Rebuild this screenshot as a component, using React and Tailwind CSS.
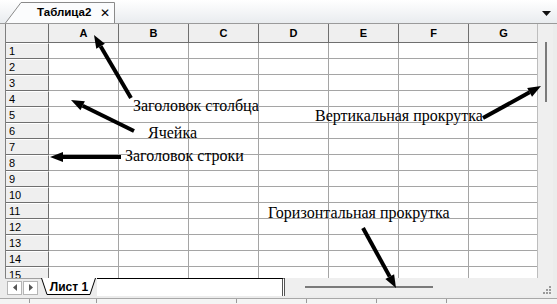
import React from 'react';

const cols = ['A', 'B', 'C', 'D', 'E', 'F', 'G'];
const rows = Array.from({ length: 15 }, (_, i) => i + 1);

const Arrow = ({ x1, y1, x2, y2 }) => {
  const a = Math.atan2(y2 - y1, x2 - x1);
  const len = 13;
  const w = 5;
  const bx = x2 - len * Math.cos(a);
  const by = y2 - len * Math.sin(a);
  const px = -Math.sin(a) * w;
  const py = Math.cos(a) * w;
  return (
    <g>
      <line x1={x1} y1={y1} x2={bx} y2={by} stroke="#000" strokeWidth="4" />
      <polygon points={`${x2},${y2} ${bx + px},${by + py} ${bx - px},${by - py}`} fill="#000" />
    </g>
  );
};

const Label = ({ className, children }) => (
  <div className={`absolute whitespace-nowrap font-['Liberation_Serif'] text-[16px] leading-none text-black ${className}`}>
    {children}
  </div>
);

export default function App() {
  return (
    <div className="relative w-[557px] h-[304px] overflow-hidden bg-[#ececec] font-['Liberation_Sans',sans-serif]">
      {/* document tab strip */}
      <div className="relative flex h-[24px] items-end justify-between border-b border-[#9a9a9a] bg-gradient-to-b from-white to-[#e9ecef] pl-[5px] pr-[6px]">
        <div className="relative flex h-[21px] w-[110px] items-center pl-[32px]">
          <svg className="absolute left-0 top-0" width="110" height="21" viewBox="0 0 110 21">
            <path d="M0.5 21 L16 0.5 H109.5 V21" fill="#fbfcfd" stroke="#8a8a8a" />
          </svg>
          <span className="relative text-[11.5px] font-bold text-black">Таблица2</span>
          <span className="relative ml-[9px] text-[12px] leading-none text-black">✕</span>
        </div>
        <svg className="mb-[7px]" width="9" height="5" viewBox="0 0 9 5">
          <polygon points="0,0 9,0 4.5,5" fill="#111" />
        </svg>
      </div>

      {/* sheet body */}
      <div className="flex h-[254px] pl-[5px] pr-[4px]">
        <div className="h-full w-[532px] overflow-hidden border-l border-[#7f7f7f] bg-white">
          <div className="grid grid-cols-[43px_repeat(7,70px)] grid-rows-[19px_repeat(15,16px)]">
            <div className="border-b border-r border-[#6f6f6f] bg-[#efefef]" />
            {cols.map((c) => (
              <div key={c} className="flex items-center justify-center border-b border-r border-[#6f6f6f] bg-[#efefef] text-[11px] font-bold text-black">
                {c}
              </div>
            ))}
            {rows.map((r) => (
              <React.Fragment key={r}>
                <div className="flex items-center border-b border-r border-[#6f6f6f] border-t border-t-white bg-[#efefef] pl-[3px] text-[11px] leading-none text-black">
                  {r}
                </div>
                {cols.map((c) => (
                  <div key={c} className="border-b border-r border-[#a5a5a5]" />
                ))}
              </React.Fragment>
            ))}
          </div>
        </div>
        {/* vertical scroll */}
        <div className="flex h-full w-[16px] justify-center border-l border-[#bdbdbd] bg-[#efefef] pt-[18px]">
          <div className="h-[60px] w-[2px] bg-[#7a7a7a]" />
        </div>
      </div>

      {/* sheet tabs + horizontal scroll */}
      <div className="flex h-[18px] pl-[5px] pr-[4px]">
        <div className="flex w-[280px] items-start">
          <div className="flex h-full items-center gap-[1px] border-t border-[#a0a0a0] pl-[2px] pr-[3px]">
            <div className="flex h-[14px] w-[15px] items-center justify-center border border-[#b5b5b5] bg-white">
              <svg width="4" height="7" viewBox="0 0 4 7"><polygon points="4,0 4,7 0,3.5" fill="#555" /></svg>
            </div>
            <div className="flex h-[14px] w-[15px] items-center justify-center border border-[#b5b5b5] bg-white">
              <svg width="4" height="7" viewBox="0 0 4 7"><polygon points="0,0 0,7 4,3.5" fill="#555" /></svg>
            </div>
          </div>
          <div className="relative flex h-full w-[56px] items-center justify-center">
            <svg className="absolute left-0 top-0" width="56" height="18" viewBox="0 0 56 18">
              <path d="M0.5 0 L6 16.5 H49 L54.5 0" fill="#fff" stroke="#000" />
            </svg>
            <span className="relative text-[12px] font-bold text-black">Лист 1</span>
          </div>
          <div className="h-full flex-1 border-r-[3px] border-t border-double border-r-[#555] border-t-black bg-white" />
        </div>
        <div className="relative flex flex-1 items-center bg-[#efefef] pl-[20px]">
          <div className="h-[2px] w-[128px] bg-[#7a7a7a]" />
          <div className="absolute bottom-[2px] right-[2px] grid grid-cols-3 gap-[1px]">
            <span />
            <span />
            <span className="h-[2px] w-[2px] bg-[#9a9a9a]" />
            <span />
            <span className="h-[2px] w-[2px] bg-[#9a9a9a]" />
            <span className="h-[2px] w-[2px] bg-[#9a9a9a]" />
            <span className="h-[2px] w-[2px] bg-[#9a9a9a]" />
            <span className="h-[2px] w-[2px] bg-[#9a9a9a]" />
            <span className="h-[2px] w-[2px] bg-[#9a9a9a]" />
          </div>
        </div>
      </div>

      {/* status strip */}
      <div className="mt-[2px] flex h-[6px] border-t border-[#a8a8a8] bg-[#f4f4f4]">
        {[30, 67, 140, 70, 70, 70].map((w, i) => (
          <div key={i} style={{ width: w }} className="h-[4px] border-r border-[#9a9a9a]" />
        ))}
      </div>

      {/* annotations */}
      <svg className="pointer-events-none absolute left-0 top-0" width="557" height="304">
        <Arrow x1={131} y1={98} x2={94} y2={35} />
        <Arrow x1={134} y1={131} x2={71} y2={100} />
        <Arrow x1={121} y1={157} x2={50} y2={157} />
        <Arrow x1={483} y1={118} x2={541} y2={86} />
        <Arrow x1={363} y1={228} x2={396} y2={288} />
      </svg>
      <Label className="left-[133px] top-[98px]">Заголовок столбца</Label>
      <Label className="left-[148px] top-[125px]">Ячейка</Label>
      <Label className="left-[125px] top-[148px]">Заголовок строки</Label>
      <Label className="left-[315px] top-[108px]">Вертикальная прокрутка</Label>
      <Label className="left-[268px] top-[205px]">Горизонтальная прокрутка</Label>
    </div>
  );
}
